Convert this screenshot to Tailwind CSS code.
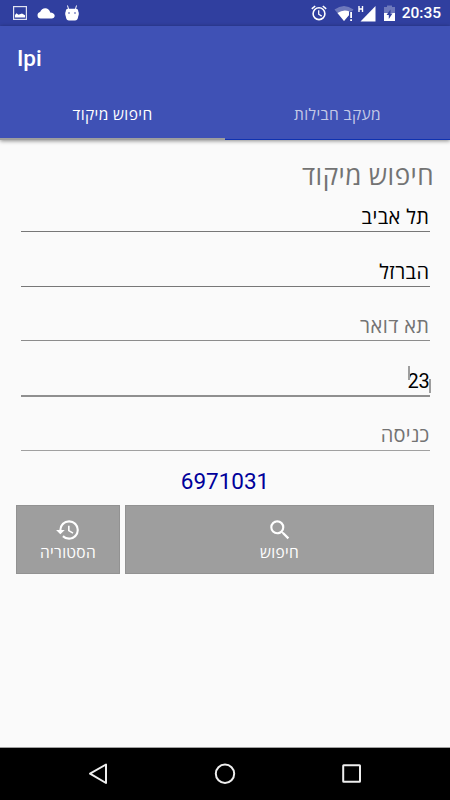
<!DOCTYPE html>
<html lang="he">
<head>
    <meta charset="UTF-8">
    <meta name="viewport" content="width=device-width, initial-scale=1.0">
    <title>Ipi</title>
    <script src="https://cdn.jsdelivr.net/npm/@tailwindcss/browser@4"></script>
</head>
<body class="flex flex-col w-[450px] h-[800px] overflow-hidden bg-[#fafafa] font-[Roboto,'Open_Sans',sans-serif]">
    <!-- Status bar -->
    <div class="flex items-center justify-between h-[26px] pl-[13px] pr-[9px] text-white bg-[#303f9f] shrink-0">
        <div class="flex items-center">
            <svg class="w-[14px] h-[14px]" viewBox="0 0 14 14" fill="none">
                <rect x=".6" y=".6" width="12.8" height="12.8" stroke="currentColor" stroke-opacity=".85" stroke-width="1.2"/>
                <path d="M2 11.500V9l1.500-1.800 2 1.600L9 7.500l3 1.700v2.300z" fill="currentColor"/>
            </svg>
            <svg class="w-[18px] h-[11px] ml-[10px]" viewBox="0 0 18 11" fill="currentColor">
                <path d="M3.500 10.500a3.300 3.300 0 0 1-.4-6.500C4 1.700 6 .3 8.200.3c2.600 0 4.500 1.700 5 4.200 2.500 0 4.500 1.300 4.500 3.300 0 1.600-1.300 2.700-3 2.700z"/>
            </svg>
            <svg class="w-[14px] h-[16px] ml-[10px]" viewBox="0 0 14 16">
                <path d="M2.500.5l1 3.500M11.500.5l-1 3.500" stroke="white" stroke-width="1"/>
                <path d="M1 5Q1.500 3.800 3 3.800h8q1.500 0 2 1.200l.3 1.500q1 2 0 4.500l-.3 1.500q-.5 3-3 3H4q-2.500 0-3-3L.7 11Q-.3 8.500.7 6.500z" fill="white"/>
                <circle cx="4" cy="8" r=".8" fill="#303f9f"/>
                <circle cx="10" cy="8" r=".8" fill="#303f9f"/>
            </svg>
        </div>
        <div class="flex items-center">
            <svg class="w-[16px] h-[16px]" viewBox="0 0 16 16" fill="none" stroke="currentColor">
                <circle cx="8" cy="8.700" r="5.900" stroke-width="1.600"/>
                <path d="M.8 3.900L4.200 1M15.200 3.900L11.800 1" stroke-width="1.600"/>
                <path d="M7.700 5.200v4l3 1.900" stroke-width="1.300"/>
            </svg>
            <svg class="w-[20px] h-[17px] ml-[7px]" viewBox="0 0 20 17" fill="currentColor">
                <path d="M.5 4.500Q10 -2.500 19.500 4.500L10 16z" fill-opacity=".3"/>
                <path d="M3.500 8Q9.500 3.800 15.500 6.500V9.500L10 16z"/>
                <path d="M15 6.500h4v10h-4z" fill="#303f9f"/>
                <path d="M16.200 7h1.800v6h-1.800zM16.200 14.300h1.800V16h-1.800z"/>
            </svg>
            <svg class="w-[18px] h-[17px] ml-[4px]" viewBox="0 0 18 17" fill="none">
                <path d="M1 1v6M4.500 1v6M1 4h3.500" stroke="white" stroke-width="1.400"/>
                <path d="M17.500 1v15.500H2.500z" fill="white"/>
            </svg>
            <svg class="w-[11px] h-[16px] ml-[8px] mr-[7px]" viewBox="0 0 11 16">
                <path d="M0 2h3V.5h5V2h3v6H0z" fill="white" fill-opacity=".3"/>
                <path d="M0 8h11v8H0z" fill="white"/>
                <path d="M6.500 4.500v4H8.500L4.800 14v-4H2.500z" fill="#303f9f"/>
            </svg>
            <span class="pt-[2px] text-[15.500px] leading-none font-medium">20:35</span>
        </div>
    </div>

    <!-- App bar and tabs -->
    <header class="relative z-10 flex flex-col h-[114px] text-white bg-[#3f51b5] shadow-[0_1px_4px_rgba(0,0,0,0.45)] shrink-0">
        <h1 class="h-[64px] pl-[17px] text-[22.500px] leading-[65px] font-medium">Ipi</h1>
        <nav class="flex flex-1 text-[15.500px] tracking-[0.4px]" dir="ltr">
            <div class="flex items-center justify-center w-[225px] pt-[3px] border-b-2 border-[#9e9e9e]"><span dir="rtl">חיפוש מיקוד</span></div>
            <div class="flex items-center justify-center w-[225px] pt-[2px] border-b border-[#0f32b0] text-white/70"><span dir="rtl">מעקב חבילות</span></div>
        </nav>
    </header>

    <!-- Search form -->
    <main class="flex flex-col flex-1 px-4 pt-[18px]" dir="rtl">
        <h2 class="h-[35px] text-[26px] leading-[36px] tracking-[0.45px] text-[#737373]">חיפוש מיקוד</h2>
        <div class="flex flex-col px-[4.500px] text-[20px] leading-[30px]">
            <div class="h-[39px] pt-[9px] border-b border-[#777] tracking-[0.45px] text-black">תל אביב</div>
            <div class="h-[55px] pt-[25px] border-b border-[#777] tracking-[0.45px] text-black">הברזל</div>
            <div class="h-[54px] pt-[24px] border-b border-[#8c8c8c] tracking-[0.45px] text-[#737373]">תא דואר</div>
            <div class="h-[56px] pt-[25px] border-b-2 border-[#8f8f8f] text-black">
                <span class="relative inline-block tracking-[-0.3px]">23
                    <span class="absolute left-0 top-0 w-[2px] h-[14px] bg-[#9e9e9e]"></span>
                    <span class="absolute right-[-1px] top-[13px] w-[2px] h-[14px] bg-[#9e9e9e]"></span>
                </span>
            </div>
            <div class="h-[54px] pt-[23px] border-b border-[#a0a0a0] tracking-[0.2px] text-[#737373]">כניסה</div>
        </div>
        <div class="h-[54px] text-[22.500px] leading-[60px] text-center text-[#00009a]">6971031</div>
        <div class="flex gap-[5px] h-[69px] text-[15.500px] leading-[20px] tracking-[0.3px] text-white">
            <button class="flex flex-col items-center w-[309px] pt-[11px] bg-[#9e9e9e] border border-[#929292]">
                <svg class="w-[26px] h-[26px]" viewBox="0 0 24 24" fill="currentColor">
                    <path d="M15.500 14h-.79l-.28-.27A6.471 6.471 0 0 0 16 9.500 6.500 6.500 0 1 0 9.500 16c1.610 0 3.090-.59 4.230-1.570l.27.28v.79l5 4.990L20.490 19l-4.990-5zm-6 0C7.010 14 5 11.990 5 9.500S7.010 5 9.500 5 14 7.010 14 9.500 11.990 14 9.500 14z"/>
                </svg>
                <span>חיפוש</span>
            </button>
            <button class="flex flex-col items-center w-[104px] pt-[11px] bg-[#9e9e9e] border border-[#929292]">
                <svg class="w-[26px] h-[26px]" viewBox="0 0 24 24" fill="currentColor">
                    <path d="M13 3a9 9 0 0 0-9 9H1l3.890 3.890.07.14L9 12H6c0-3.870 3.130-7 7-7s7 3.130 7 7-3.130 7-7 7c-1.930 0-3.680-.79-4.940-2.060l-1.420 1.420A8.954 8.954 0 0 0 13 21a9 9 0 0 0 0-18zm-1 5v5l4.280 2.540.72-1.210-3.500-2.080V8H12z"/>
                </svg>
                <span>הסטוריה</span>
            </button>
        </div>
    </main>

    <!-- Navigation bar -->
    <div class="flex items-center justify-between h-[53px] px-[88px] text-[#eee] bg-black border-t border-[#a0a0a0] shrink-0">
        <svg class="w-[20px] h-[22px]" viewBox="0 0 20 22" fill="none" stroke="currentColor" stroke-width="2" stroke-linejoin="round">
            <path d="M18 1.500v18.500L2 10.700z"/>
        </svg>
        <svg class="w-[22px] h-[22px]" viewBox="0 0 22 22" fill="none" stroke="currentColor" stroke-width="2">
            <circle cx="11" cy="10.700" r="9.200"/>
        </svg>
        <svg class="w-[20px] h-[20px]" viewBox="0 0 20 20" fill="none" stroke="currentColor" stroke-width="2">
            <rect x="1.200" y="1.200" width="16.800" height="16.500" rx=".5"/>
        </svg>
    </div>
</body>
</html>
